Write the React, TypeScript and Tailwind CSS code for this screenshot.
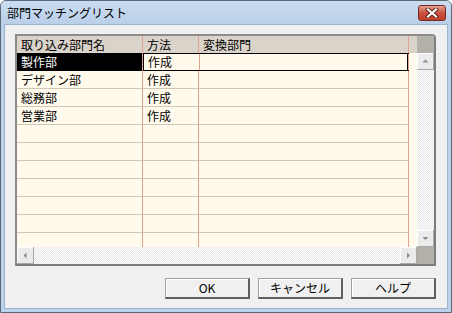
import React from 'react';

const rows: [string, string][] = [
    ["製作部", "作成"],
    ["デザイン部", "作成"],
    ["総務部", "作成"],
    ["営業部", "作成"],
    ["", ""],
    ["", ""],
    ["", ""],
    ["", ""],
    ["", ""],
    ["", ""],
    ["", ""],
];

const checker = "bg-[image:repeating-conic-gradient(#e9e9e9_0%_25%,#fbfbfb_0%_50%)] bg-[length:2px_2px]";

const ScrollBtn = ({ dir }: { dir: 'up' | 'down' | 'left' | 'right' }) => {
    const pts = {
        up: "2.5,6.5 8.5,6.5 5.5,3.5",
        down: "2.5,4 8.5,4 5.5,7",
        left: "6.5,2.5 6.5,8.5 3.5,5.5",
        right: "4,2.5 4,8.5 7,5.5",
    }[dir];
    return (
        <div className='w-[17px] h-[17px] shrink-0 flex items-center justify-center bg-[#ebebeb] border-r border-b border-[#a9a9a9] shadow-[inset_1px_1px_0_#ffffff]'>
            <svg width="11" height="11" viewBox="0 0 11 11">
                <polygon points={pts} fill="#8d8d8d" />
            </svg>
        </div>
    );
};

const Button = ({ label }: { label: string }) => (
    <button className='w-[85px] h-[21px] bg-[#f0f0f0] border border-t-[#a0a0a0] border-l-[#a0a0a0] border-r-[#5f5f5f] border-b-[#5f5f5f] border-r-2 border-b-2 shadow-[inset_1px_1px_0_#ffffff] text-[12px] leading-none text-black flex items-center justify-center'>
        {label}
    </button>
);

const App = () => {
    return (
        <div className='w-[452px] h-[313px] flex flex-col bg-[#bcd2ea] border border-[#5a6878] rounded-t-[6px] overflow-hidden' style={{ fontFamily: '"Noto Sans CJK JP", "Liberation Sans", sans-serif' }}>
            {/* title bar */}
            <div className='h-[23px] shrink-0 flex items-center pl-[6px] pr-[5px] bg-gradient-to-b from-[#cbdcf0] to-[#b9d0e9]'>
                <span className='text-[12px] text-black leading-none mt-[1px]'>部門マッチングリスト</span>
                <div className='ml-auto w-[28px] h-[16px] mt-[1px] rounded-[3px] border border-[#7a2a22] bg-gradient-to-b from-[#e0a194] via-[#c8523f] to-[#c0402c] flex items-center justify-center'>
                    <svg width="14" height="10" viewBox="0 0 14 10">
                        <path d="M3 1.5 L11 8.5 M11 1.5 L3 8.5" stroke="#5b2018" strokeWidth="4" strokeLinecap="square" />
                        <path d="M3 1.5 L11 8.5 M11 1.5 L3 8.5" stroke="#ffffff" strokeWidth="2.2" strokeLinecap="square" />
                    </svg>
                </div>
            </div>

            {/* client area */}
            <div className='flex-1 mx-[3px] mb-[3px] bg-[#f0f0f0] border border-[#9ab4d2] flex flex-col pt-[9px] pl-[10px] pr-[10px]'>
                {/* grid */}
                <div className='w-[421px] h-[232px] flex border-2 border-[#8b8b8b] border-r-[#7c7c7c] border-b-[#7c7c7c] rounded-tr-[4px] overflow-hidden text-[12px] leading-[18px] text-black'>
                    <div className='w-[401px] flex flex-col'>
                        {/* header */}
                        <div className='h-[17px] shrink-0 flex bg-[#d9d3ca] leading-[17px]'>
                            <div className='w-[126px] pl-[4px] border-r border-[#e0a393]'>取り込み部門名</div>
                            <div className='w-[56px] pl-[4px] border-r border-[#e0a393]'>方法</div>
                            <div className='w-[210px] pl-[4px] border-r border-[#e0a393]'>変換部門</div>
                            <div className='flex-1' />
                        </div>
                        {/* body */}
                        <div className='flex-1 bg-[#fffaec] overflow-hidden'>
                            {rows.map((r, i) => (
                                <div key={i} className='h-[18px] flex'>
                                    <div className={`w-[126px] pl-[4px] border-r border-[#e0a393] ${i === 0 ? 'bg-black text-white' : 'border-b border-b-[#d0c8b6]'}`}>{r[0]}</div>
                                    {i === 0 ? (
                                        <div className='w-[266px] flex border border-black border-r-0'>
                                            <div className='w-[56px] pl-[4px] leading-[16px] border-r border-[#e0a393]'>{r[1]}</div>
                                            <div className='w-[209px] border-r border-black' />
                                            <div className='w-[1px] bg-[#e0a393]' />
                                        </div>
                                    ) : (
                                        <>
                                            <div className='w-[56px] pl-[4px] border-r border-b border-[#e0a393] border-b-[#d0c8b6]'>{r[1]}</div>
                                            <div className='w-[210px] border-r border-b border-[#e0a393] border-b-[#d0c8b6]' />
                                        </>
                                    )}
                                    <div className='flex-1' />
                                </div>
                            ))}
                        </div>
                        {/* horizontal scrollbar */}
                        <div className={`h-[17px] shrink-0 flex ${checker}`}>
                            <ScrollBtn dir="left" />
                            <div className='flex-1' />
                            <ScrollBtn dir="right" />
                        </div>
                    </div>
                    {/* vertical scrollbar */}
                    <div className='w-[17px] flex flex-col'>
                        <div className='h-[17px] shrink-0 bg-[#b3b0aa]' />
                        <ScrollBtn dir="up" />
                        <div className={`flex-1 ${checker}`} />
                        <ScrollBtn dir="down" />
                        <div className='h-[17px] shrink-0 bg-[#b3b0aa]' />
                    </div>
                </div>

                {/* buttons */}
                <div className='mt-[12px] flex justify-end gap-[8px] pr-[1px]'>
                    <Button label="OK" />
                    <Button label="キャンセル" />
                    <Button label="ヘルプ" />
                </div>
            </div>
        </div>
    );
};

export default App;
